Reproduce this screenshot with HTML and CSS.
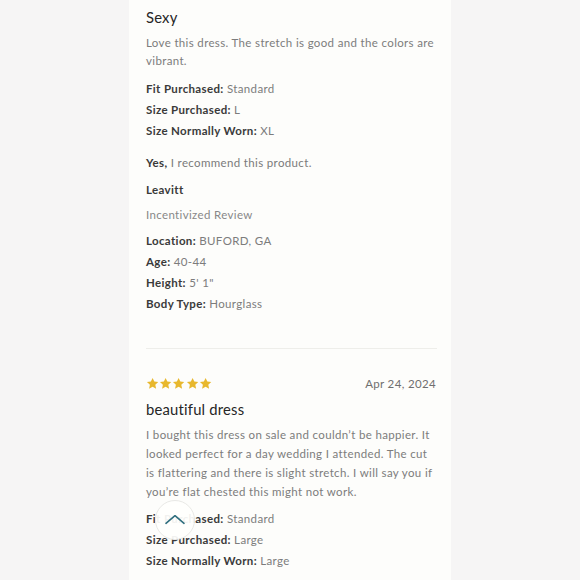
FILE: index.html
```html
<!DOCTYPE html>
<html lang="en">
<head>
<meta charset="utf-8">
<title>Reviews</title>
<link rel="stylesheet" href="styles.css">
</head>
<body>
<main class="column">
  <article class="review first">
    <h3 class="title">Sexy</h3>
    <p class="text">Love this dress. The stretch is good and the colors are vibrant.</p>
    <ul class="attrs">
      <li><b>Fit Purchased:</b> Standard</li>
      <li><b>Size Purchased:</b> L</li>
      <li><b>Size Normally Worn:</b> XL</li>
    </ul>
    <p class="recommend"><b>Yes,</b> I recommend this product.</p>
    <p class="author">Leavitt</p>
    <p class="badge">Incentivized Review</p>
    <ul class="attrs profile">
      <li><b>Location:</b> BUFORD, GA</li>
      <li><b>Age:</b> 40-44</li>
      <li><b>Height:</b> 5' 1"</li>
      <li><b>Body Type:</b> Hourglass</li>
    </ul>
  </article>
  <article class="review second">
    <div class="meta">
      <div class="stars" aria-label="5 stars">
        <svg viewBox="0 0 24 24"><path d="M12 1.8l3.1 6.6 7.2.8-5.4 4.9 1.5 7.1L12 17.6l-6.4 3.6 1.5-7.1L1.7 9.2l7.2-.8z"/></svg>
        <svg viewBox="0 0 24 24"><path d="M12 1.8l3.1 6.6 7.2.8-5.4 4.9 1.5 7.1L12 17.6l-6.4 3.6 1.5-7.1L1.7 9.2l7.2-.8z"/></svg>
        <svg viewBox="0 0 24 24"><path d="M12 1.8l3.1 6.6 7.2.8-5.4 4.9 1.5 7.1L12 17.6l-6.4 3.6 1.5-7.1L1.7 9.2l7.2-.8z"/></svg>
        <svg viewBox="0 0 24 24"><path d="M12 1.8l3.1 6.6 7.2.8-5.4 4.9 1.5 7.1L12 17.6l-6.4 3.6 1.5-7.1L1.7 9.2l7.2-.8z"/></svg>
        <svg viewBox="0 0 24 24"><path d="M12 1.8l3.1 6.6 7.2.8-5.4 4.9 1.5 7.1L12 17.6l-6.4 3.6 1.5-7.1L1.7 9.2l7.2-.8z"/></svg>
      </div>
      <span class="date">Apr 24, 2024</span>
    </div>
    <h3 class="title">beautiful dress</h3>
    <p class="text">I bought this dress on sale and couldn’t be happier. It looked perfect for a day wedding I attended. The cut is flattering and there is slight stretch. I will say you if you’re flat chested this might not work.</p>
    <ul class="attrs">
      <li><b>Fit Purchased:</b> Standard</li>
      <li><b>Size Purchased:</b> Large</li>
      <li><b>Size Normally Worn:</b> Large</li>
    </ul>
  </article>
  <button class="to-top" aria-label="Back to top">
    <svg viewBox="0 0 40 40"><path d="M10.5 23.5L20 15.5l9.5 8"/></svg>
  </button>
</main>
</body>
</html>
```
FILE: styles.css
```css
html, body {
  margin: 0;
  padding: 0;
}
body {
  background: #f6f5f5;
  font-family: Lato, "Noto Sans", sans-serif;
  color: #7a7a7a;
  height: 580px;
  overflow: hidden;
}
.column {
  position: relative;
  width: 322px;
  margin: 0 auto;
  min-height: 580px;
  background: #fdfdfb;
  padding: 6px 15px 0 17px;
  box-sizing: border-box;
}
p, ul, h3 {
  margin: 0;
  padding: 0;
}
ul { list-style: none; }
.title {
  font-size: 14.8px;
  font-weight: 400;
  color: #262626;
  line-height: 22px;
  letter-spacing: 0.2px;
}
.text {
  font-size: 11.5px;
  line-height: 18.4px;
  letter-spacing: 0.35px;
  margin-top: 6px;
  color: #7c7c7c;
}
.attrs {
  margin-top: 7px;
  font-size: 11.5px;
  line-height: 21px;
  letter-spacing: 0.35px;
  color: #7c7c7c;
}
b {
  font-weight: 700;
  color: #3a3a3a;
}
.recommend {
  margin-top: 11px;
  font-size: 11.5px;
  line-height: 21px;
  letter-spacing: 0.35px;
}
.author {
  margin-top: 6px;
  font-size: 11.5px;
  line-height: 21px;
  font-weight: 700;
  color: #3a3a3a;
  letter-spacing: 0.35px;
}
.badge {
  margin-top: 4px;
  font-size: 11.5px;
  line-height: 21px;
  letter-spacing: 0.35px;
  color: #888;
}
.attrs.profile { margin-top: 5px; }
.review.first {
  padding-bottom: 34px;
  border-bottom: 1px solid #eeeeea;
  margin-right: -1px;
}
.review.second { padding-top: 24px; }
.meta {
  display: flex;
  justify-content: space-between;
  align-items: center;
  height: 21px;
}
.stars {
  display: flex;
}
.stars svg {
  width: 13.2px;
  height: 13.2px;
  fill: #e8b82e;
}
.date {
  font-size: 11.5px;
  letter-spacing: 0.35px;
  color: #6f6f6f;
}
.second .title { margin-top: 4px; }
.second .text {
  margin-top: 5px;
  line-height: 19px;
}
.to-top {
  position: absolute;
  left: 26px;
  top: 500px;
  width: 40px;
  height: 40px;
  padding: 0;
  border-radius: 50%;
  border: 1px solid #e9e9e6;
  background: rgba(255, 255, 253, 0.93);
}
.to-top svg {
  display: block;
  width: 38px;
  height: 38px;
  fill: none;
  stroke: #2f6e7e;
  stroke-width: 1.7;
  stroke-linecap: round;
  stroke-linejoin: round;
}
```
